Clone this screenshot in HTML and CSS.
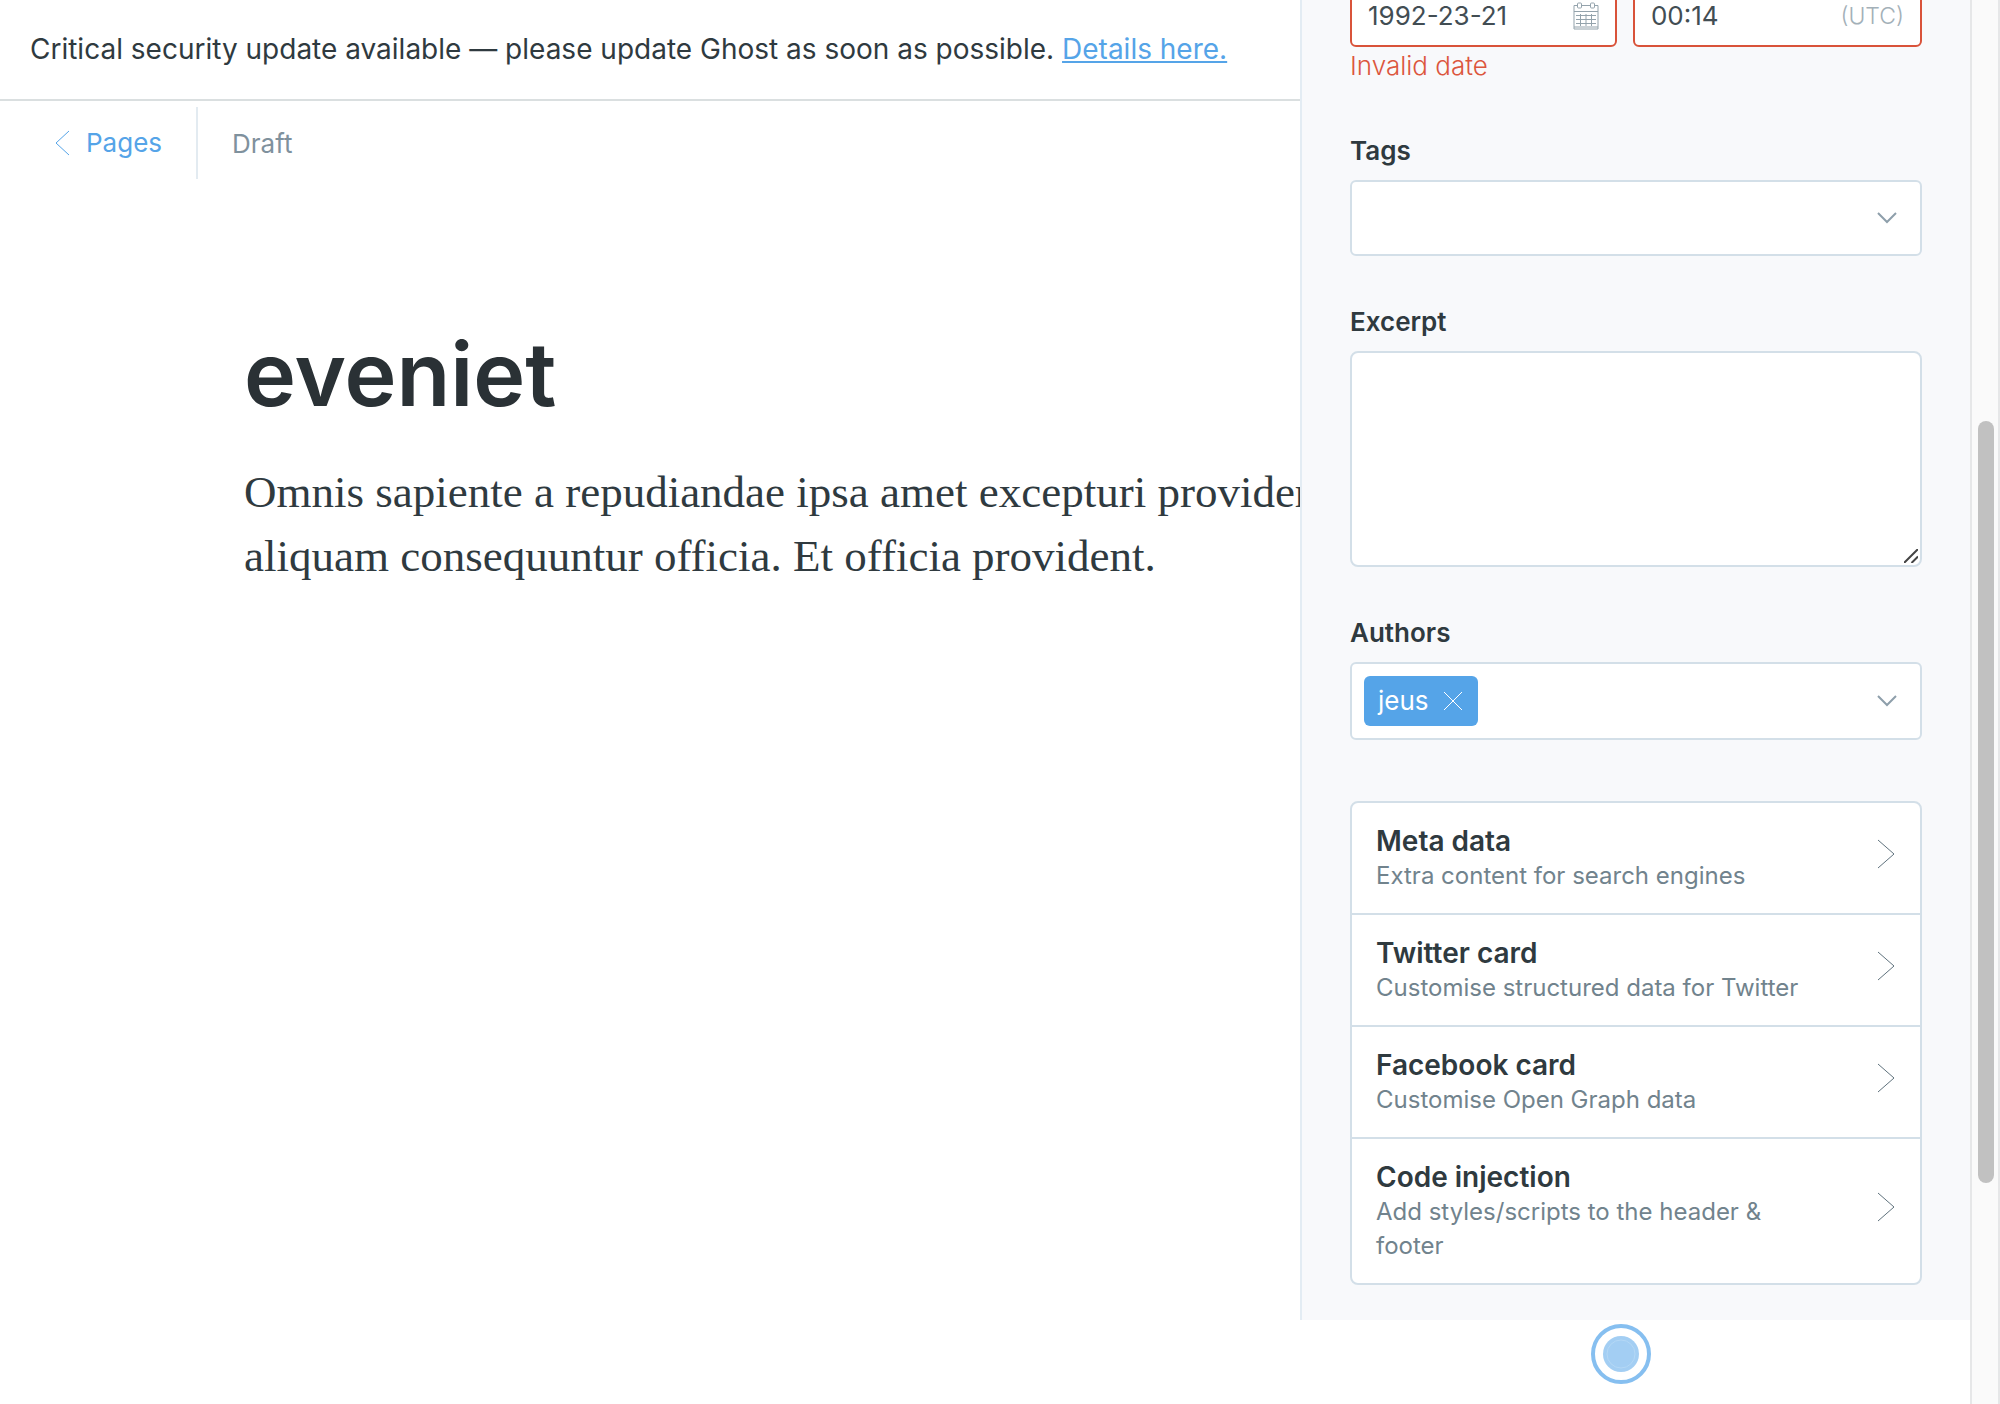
FILE: index.html
```html
<!DOCTYPE html>
<html lang="en">
<head>
<meta charset="utf-8">
<meta name="viewport" content="width=device-width, initial-scale=1">
<title>Ghost – Page editor</title>
<link rel="stylesheet" href="styles.css">
</head>
<body>
<div class="app">
  <main class="editor">
    <div class="alert" role="alert">Critical security update available — please update Ghost as soon as possible. <a class="alert-link" href="#details">Details here.</a></div>
    <header class="toolbar">
      <a class="back" href="#pages">
        <svg class="back-icon" viewBox="0 0 16 26" aria-hidden="true"><path d="M15 1 2 13l13 12"/></svg>
        Pages
      </a>
      <span class="status">Draft</span>
    </header>
    <article class="document">
      <h1 class="document-title">eveniet</h1>
      <p class="document-body">Omnis sapiente a repudiandae ipsa amet excepturi provident aliquam consequuntur officia. Et officia provident.</p>
    </article>
  </main>

  <div class="side">
    <form class="settings">
      <div class="datetime">
        <div class="box invalid">
          <input class="box-input" type="text" value="1992-23-21" aria-label="Publish date">
          <svg class="calendar" viewBox="0 0 26 28" aria-hidden="true">
            <path d="M4.500 3.500H1v23.500h24V3.500h-3.500M8.500 3.500h9M1 9.500h24M1 25h24"/>
            <rect x="4.500" y="1" width="4" height="5" rx="1"/><rect x="17.500" y="1" width="4" height="5" rx="1"/>
            <path d="M3 13.500h20M3 17.500h20M3 21.500h20M7.500 12v12M13 12v12M18.500 12v12"/>
          </svg>
        </div>
        <div class="box invalid">
          <input class="box-input" type="text" value="00:14" aria-label="Publish time">
          <span class="zone">(UTC)</span>
        </div>
      </div>
      <p class="error">Invalid date</p>

      <div class="field">
        <label class="label" for="tags">Tags</label>
        <div class="box">
          <select class="box-input" id="tags"><option></option></select>
          <svg class="caret" viewBox="0 0 20 12" aria-hidden="true"><path d="m1 1 9 9 9-9"/></svg>
        </div>
      </div>

      <div class="field">
        <label class="label" for="excerpt">Excerpt</label>
        <div class="area">
          <textarea class="area-input" id="excerpt"></textarea>
          <svg class="grip" viewBox="0 0 14 14" aria-hidden="true"><path d="M0 14 14 0M7.500 14 14 7.500"/></svg>
        </div>
      </div>

      <div class="field">
        <label class="label" for="authors">Authors</label>
        <div class="box tokens">
          <span class="token">jeus
            <button class="token-remove" type="button" aria-label="Remove jeus">
              <svg class="cross" viewBox="0 0 18 18" aria-hidden="true"><path d="m0 0 18 18M18 0 0 18"/></svg>
            </button>
          </span>
          <input class="box-input" id="authors" type="text">
          <svg class="caret" viewBox="0 0 20 12" aria-hidden="true"><path d="m1 1 9 9 9-9"/></svg>
        </div>
      </div>

      <div class="links">
        <button class="link" type="button">
          <span class="link-text"><span class="link-title">Meta data</span><span class="link-desc">Extra content for search engines</span></span>
          <svg class="arrow" viewBox="0 0 18 30" aria-hidden="true"><path d="m1 1 16 14L1 29"/></svg>
        </button>
        <button class="link" type="button">
          <span class="link-text"><span class="link-title">Twitter card</span><span class="link-desc">Customise structured data for Twitter</span></span>
          <svg class="arrow" viewBox="0 0 18 30" aria-hidden="true"><path d="m1 1 16 14L1 29"/></svg>
        </button>
        <button class="link" type="button">
          <span class="link-text"><span class="link-title">Facebook card</span><span class="link-desc">Customise Open Graph data</span></span>
          <svg class="arrow" viewBox="0 0 18 30" aria-hidden="true"><path d="m1 1 16 14L1 29"/></svg>
        </button>
        <button class="link" type="button">
          <span class="link-text"><span class="link-title">Code injection</span><span class="link-desc">Add styles/scripts to the header &amp; footer</span></span>
          <svg class="arrow" viewBox="0 0 18 30" aria-hidden="true"><path d="m1 1 16 14L1 29"/></svg>
        </button>
      </div>
    </form>
    <div class="marker">
      <svg class="marker-dot" viewBox="0 0 60 60" aria-hidden="true"><circle class="marker-ring" cx="30" cy="30" r="28"/><circle class="marker-core" cx="30" cy="30" r="18"/><circle class="marker-edge" cx="30" cy="30" r="14"/></svg>
    </div>
  </div>

  <div class="scrollbar"><div class="scrollbar-thumb"></div></div>
</div>
</body>
</html>
```
FILE: styles.css
```css
* {
  box-sizing: border-box;
}

body {
  margin: 0;
  background: #fff;
  color: #2f3a3f;
  font: 26px/36px Inter, "Liberation Sans", sans-serif;
}

input,
select,
textarea,
button {
  margin: 0;
  padding: 0;
  border: 0;
  background: none;
  color: inherit;
  font: inherit;
  text-align: left;
  appearance: none;
  outline: 0;
}

svg {
  display: block;
  flex: none;
  fill: none;
  stroke: currentColor;
}

.app {
  display: grid;
  grid-template-columns: minmax(0, 1fr) 670px 30px;
  min-height: 100vh;
}

/* Editor */
.editor {
  overflow: hidden;
}

.alert {
  padding: 31px 30px 32px;
  border-bottom: 2px solid #dadfe0;
  font-size: 28px;
  white-space: nowrap;
}

.alert-link {
  color: #55a4e8;
  text-decoration-thickness: 2px;
  text-underline-offset: 2px;
}

.toolbar {
  display: flex;
  align-items: center;
  margin-top: 6px;
  height: 72px;
}

.back {
  display: flex;
  align-items: center;
  gap: 16px;
  align-self: stretch;
  padding: 0 34px 0 54px;
  border-right: 2px solid #e3ebf1;
  color: #55a4e8;
  text-decoration: none;
}

.back-icon {
  width: 16px;
  height: 26px;
}

.status {
  padding: 2px 0 0 34px;
  color: #7f919d;
}

.document {
  padding: 143px 0 0 244px;
}

.document-title {
  margin: 0;
  color: #2a3135;
  font-size: 88px;
  font-weight: 600;
  line-height: 104px;
}

.document-body {
  width: 1140px;
  margin: 34px 0 0;
  font-family: "Liberation Serif", serif;
  font-size: 45px;
  line-height: 64px;
}

/* Settings */
.settings {
  padding: 0 48px 35px;
  border-left: 2px solid #e3ecf3;
  background: #f8f9fb;
  overflow: hidden;
}

.datetime {
  display: grid;
  grid-template-columns: 12fr 13fr;
  gap: 16px;
  margin-top: -15px;
}

.box {
  display: flex;
  align-items: center;
  min-width: 0;
  min-height: 76px;
  padding: 0 17px;
  border: 2px solid #d3dfe8;
  border-radius: 6px;
  background: #fff;
}

.box-input {
  flex: 1;
  min-width: 0;
  color: #424d53;
}

.box.invalid {
  min-height: 62px;
  padding: 0 16px;
  border-color: #d9533a;
}

.calendar {
  width: 26px;
  height: 28px;
  color: #94a3ac;
}

.zone {
  color: #a3b0b8;
  font-size: 23px;
  font-weight: 300;
}

.error {
  margin: 1px 0 49px;
  color: #dc563d;
  font-weight: 300;
}

.field {
  margin-bottom: 48px;
}

.label {
  display: block;
  margin-bottom: 11px;
  font-weight: 600;
}

.caret {
  width: 20px;
  height: 12px;
  margin-right: 6px;
  color: #8e9fab;
  stroke-width: 2;
}

.area {
  position: relative;
}

.area-input {
  display: block;
  width: 100%;
  height: 216px;
  padding: 16px;
  border: 2px solid #d3dfe8;
  border-radius: 8px;
  background: #fff;
  resize: none;
}

.grip {
  position: absolute;
  right: 4px;
  bottom: 4px;
  width: 14px;
  height: 14px;
  color: #444;
  stroke-width: 2;
}

.tokens {
  min-height: 78px;
  padding-left: 12px;
}

.token {
  display: flex;
  align-items: center;
  gap: 15px;
  height: 50px;
  padding: 0 16px 0 14px;
  border-radius: 6px;
  background: #55a4e8;
  color: #fff;
}

.cross {
  width: 18px;
  height: 18px;
}

.links {
  margin-top: 61px;
  border: 2px solid #d3dfe8;
  border-radius: 8px;
  background: #fff;
}

.link {
  display: flex;
  align-items: center;
  justify-content: space-between;
  width: 100%;
  padding: 21px 25px 20px 24px;
}

.link + .link {
  border-top: 2px solid #d3dfe8;
}

.link-text {
  display: flex;
  flex-direction: column;
  max-width: 450px;
}

.link-title {
  font-size: 28px;
  font-weight: 600;
  line-height: 35px;
}

.link-desc {
  color: #71838d;
  font-size: 24px;
  line-height: 34px;
}

.arrow {
  width: 18px;
  height: 30px;
  margin-bottom: 10px;
  color: #5f727d;
}

.marker {
  display: flex;
  justify-content: center;
  padding: 4px 28px 0 0;
}

.marker-dot {
  width: 60px;
  height: 60px;
}

.marker-ring {
  stroke: #86bff0;
  stroke-width: 4;
}

.marker-core {
  fill: #a3cef3;
  stroke: none;
}

.marker-edge {
  stroke: #b4d8f6;
}

/* Page scrollbar */
.scrollbar {
  position: relative;
  border: solid #e6e7e8;
  border-width: 0 2px;
  background: #fafafa;
}

.scrollbar-thumb {
  position: absolute;
  top: 30%;
  right: 4px;
  left: 6px;
  height: 54.25%;
  border-radius: 8px;
  background: #c1c1c1;
}
```
